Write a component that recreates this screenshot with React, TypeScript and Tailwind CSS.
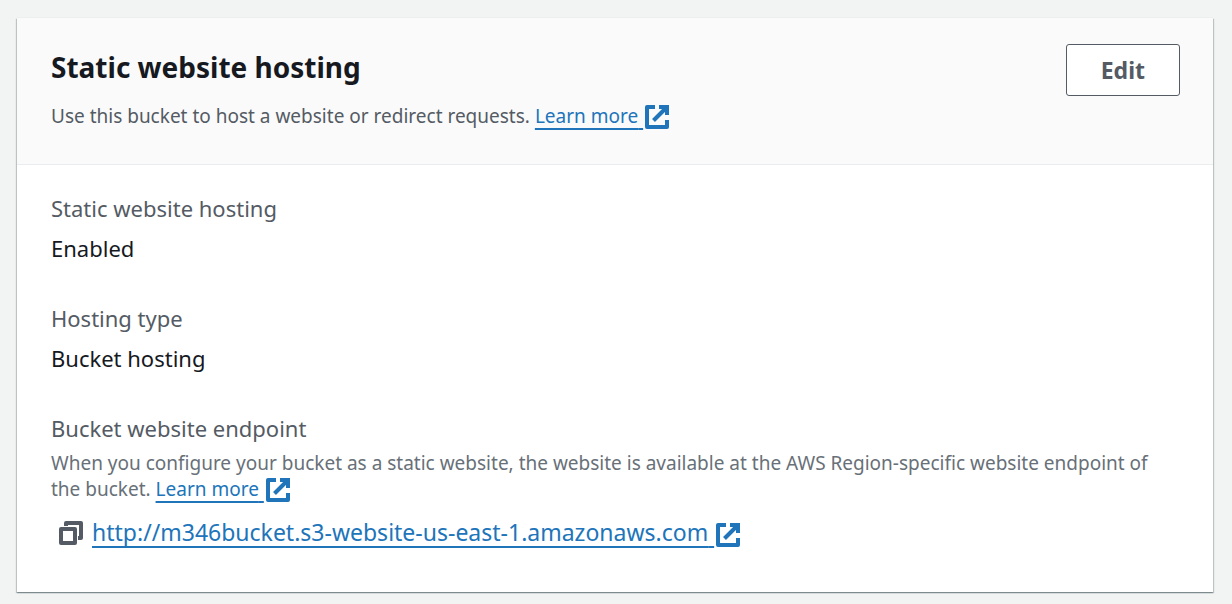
import type { ReactNode } from "react";

function ExternalIcon() {
  return (
    <svg
      viewBox="0 0 24 24"
      className="ml-0.5 inline-block size-6 shrink-0 align-[-6px]"
      fill="none"
      stroke="currentColor"
      strokeWidth="4"
      aria-hidden="true"
    >
      <path d="M10 2H2V22H22V15" strokeLinejoin="round" />
      <path d="M14 2H22V10" />
      <path d="M21.500 2.500L8.500 15.500" />
    </svg>
  );
}

function CopyIcon() {
  return (
    <svg
      viewBox="0 0 24 24"
      className="size-6"
      fill="none"
      stroke="currentColor"
      strokeWidth="4"
      strokeLinejoin="round"
      aria-hidden="true"
    >
      <path d="M2 8H16V22H2Z" />
      <path d="M7 5V2H22V17H19" />
    </svg>
  );
}

function ExternalLink({ href, children }: { href: string; children: ReactNode }) {
  return (
    <a href={href} className="whitespace-nowrap text-[#2074ba]">
      <span className="underline decoration-2 underline-offset-[5px] [text-decoration-skip-ink:none]">
        {children}&nbsp;
      </span>
      <ExternalIcon />
    </a>
  );
}

function Field({ label, children }: { label: string; children: ReactNode }) {
  return (
    <div>
      <dt className="text-[22px] leading-[35px] text-[#545b64]">{label}</dt>
      {children}
    </div>
  );
}

export default function App() {
  return (
    <main className="min-h-screen bg-[#f2f3f3] pt-[18px] pr-[19px] pb-3 pl-[17px] font-['Noto_Sans',sans-serif] text-[#16191f]">
      <section className="bg-white pb-[42px] shadow-[0_0_1px_0_#d5dbdb,1px_1px_1px_0_#001c2433,-1px_1px_1px_0_#001c2433,0_1px_1px_0_#001c244d]">
        <header className="flex items-start justify-between border-b border-[#eaeded] bg-[#fafafa] pt-[26px] pr-[33px] pb-[31px] pl-[34px]">
          <div>
            <h2 className="text-[28px] leading-[46px] font-bold">Static website hosting</h2>
            <p className="mt-[9px] text-[19px] leading-[34px] text-[#545b64]">
              Use this bucket to host a website or redirect requests.{" "}
              <ExternalLink href="#hosting">Learn more</ExternalLink>
            </p>
          </div>
          <button
            type="button"
            className="h-[52px] rounded-[3px] border border-[#545b64] bg-white px-[34px] text-[23px] leading-[35px] font-bold text-[#545b64]"
          >
            Edit
          </button>
        </header>
        <dl className="flex flex-col gap-[35px] pt-[26px] pr-10 pl-[34px]">
          <Field label="Static website hosting">
            <dd className="mt-[5px] text-[22px] leading-[35px]">Enabled</dd>
          </Field>
          <Field label="Hosting type">
            <dd className="mt-[5px] text-[22px] leading-[35px]">Bucket hosting</dd>
          </Field>
          <Field label="Bucket website endpoint">
            <dd className="mt-1 text-[19px] leading-[26px] text-[#687078]">
              When you configure your bucket as a static website, the website is available at the AWS Region-specific
              website endpoint of the bucket. <ExternalLink href="#endpoint">Learn more</ExternalLink>
            </dd>
            <dd className="mt-[13px] flex items-center gap-[9px] pl-2 text-[23px] leading-[35px]">
              <button type="button" aria-label="Copy endpoint" className="text-[#545b64]">
                <CopyIcon />
              </button>
              <ExternalLink href="http://m346bucket.s3-website-us-east-1.amazonaws.com">
                http://m346bucket.s3-website-us-east-1.amazonaws.com
              </ExternalLink>
            </dd>
          </Field>
        </dl>
      </section>
    </main>
  );
}
